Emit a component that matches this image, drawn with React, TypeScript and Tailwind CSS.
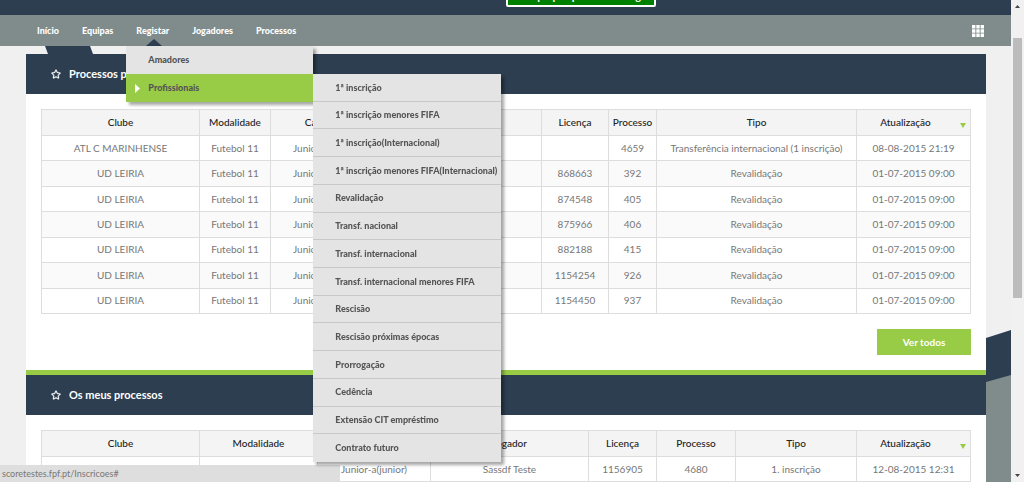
import { FaRegStar } from 'react-icons/fa'

const navItems = ['Início', 'Equipas', 'Registar', 'Jogadores', 'Processos']

const contractItems = [
  '1ª inscrição',
  '1ª inscrição menores FIFA',
  '1ª inscrição(Internacional)',
  '1ª inscrição menores FIFA(Internacional)',
  'Revalidação',
  'Transf. nacional',
  'Transf. internacional',
  'Transf. internacional menores FIFA',
  'Rescisão',
  'Rescisão próximas épocas',
  'Prorrogação',
  'Cedência',
  'Extensão CIT empréstimo',
  'Contrato futuro',
]

const columns = ['Clube', 'Modalidade', 'Categoria', 'Jogador', 'Licença', 'Processo', 'Tipo', 'Atualização']

const pendingWidths = ['w-[158px]', 'w-[71px]', 'w-[111px]', '', 'w-[67px]', 'w-[48px]', 'w-[200px]', 'w-[114px]']
const mineWidths = ['w-[158px]', 'w-[118px]', 'w-[113px]', '', 'w-[68px]', 'w-[79px]', 'w-[121px]', 'w-[114px]']

const pendingRows = [
  ['ATL C MARINHENSE', 'Futebol 11', 'Junior-a(junior)', '', '', '4659', 'Transferência internacional (1 inscrição)', '08-08-2015 21:19'],
  ['UD LEIRIA', 'Futebol 11', 'Junior-a(junior)', '', '868663', '392', 'Revalidação', '01-07-2015 09:00'],
  ['UD LEIRIA', 'Futebol 11', 'Junior-a(junior)', '', '874548', '405', 'Revalidação', '01-07-2015 09:00'],
  ['UD LEIRIA', 'Futebol 11', 'Junior-a(junior)', '', '875966', '406', 'Revalidação', '01-07-2015 09:00'],
  ['UD LEIRIA', 'Futebol 11', 'Junior-a(junior)', '', '882188', '415', 'Revalidação', '01-07-2015 09:00'],
  ['UD LEIRIA', 'Futebol 11', 'Junior-a(junior)', '', '1154254', '926', 'Revalidação', '01-07-2015 09:00'],
  ['UD LEIRIA', 'Futebol 11', 'Junior-a(junior)', '', '1154450', '937', 'Revalidação', '01-07-2015 09:00'],
]

const mineRows = [
  ['ATL C MARINHENSE', 'Futebol 11', 'Junior-a(junior)', 'Sassdf Teste', '1156905', '4680', '1. inscrição', '12-08-2015 12:31'],
]

function PanelTitle({ children }: { children: string }) {
  return (
    <h2 className="flex h-10 items-center gap-2 bg-[#2c3e50] pl-[25px] text-[11px] font-bold text-white">
      <FaRegStar className="size-[10px]" stroke="#fff" strokeWidth={16} />
      {children}
    </h2>
  )
}

function ProcessTable({ widths, rows, height }: { widths: string[]; rows: string[][]; height: string }) {
  return (
    <table className={`w-full table-fixed border-collapse text-center text-[10px] leading-4 whitespace-nowrap ${height}`}>
      <colgroup>
        {widths.map((w, i) => (
          <col key={i} className={w} />
        ))}
      </colgroup>
      <thead>
        <tr className="h-[26px] bg-[#f4f4f4] text-[#222]">
          {columns.map((name, i) => (
            <th key={name} className="relative border border-[#ddd] p-0 pb-px font-medium">
              {i === 7 ? (
                <>
                  <span className="pr-4">{name}</span>
                  <svg className="absolute right-1 bottom-[7px] h-[5px] w-[6px]" viewBox="0 0 6 5">
                    <path d="M0 0h6L3 5z" fill="#99cc46" />
                  </svg>
                </>
              ) : (
                name
              )}
            </th>
          ))}
        </tr>
      </thead>
      <tbody>
        {rows.map((row, r) => (
          <tr key={r} className="bg-white text-[#777] even:bg-[#fafafa]">
            {row.map((cell, i) => (
              <td key={i} className="border border-[#ddd] p-0 pb-px">{cell}</td>
            ))}
          </tr>
        ))}
      </tbody>
    </table>
  )
}

function RegisterMenu() {
  return (
    <div className="absolute top-full left-px z-20 w-[187px] bg-[#e4e4e4] text-[9px] text-[#555] shadow-[3px_3px_3px_rgba(0,0,0,0.35)]">
      <a href="#" className="flex h-7 items-center pl-[22px]">Amadores</a>
      <div className="relative">
        <a href="#" className="flex h-7 items-center bg-[#99cc46] pl-[22px]">
          <svg className="absolute left-[9px] h-[9px] w-[5px]" viewBox="0 0 5 9">
            <path d="M0 0l5 4.5L0 9z" fill="#fff" />
          </svg>
          Profissionais
        </a>
        <ul className="absolute top-0 left-full grid h-[388px] w-[188px] auto-rows-fr bg-[#e4e4e4] shadow-[3px_3px_3px_rgba(0,0,0,0.35)]">
          {contractItems.map((item) => (
            <li key={item} className="flex border-b border-[#c8c8c8] last:border-b-0">
              <a href="#" className="flex flex-1 items-center pl-[22px] whitespace-nowrap">{item}</a>
            </li>
          ))}
        </ul>
      </div>
    </div>
  )
}

function Header() {
  return (
    <header>
      <div className="flex h-[15px] items-end justify-center overflow-hidden bg-[#2c3e50] pb-2 pl-[151px]">
        <button className="flex h-[26px] w-[150px] shrink-0 items-end justify-center rounded-xs border-2 border-white bg-[#008000] pb-px text-[11px] font-bold text-white">
          Campo por preencher: Liga
        </button>
      </div>
      <nav className="flex h-[31px] items-center justify-between bg-[#7f8c8b] pr-[27px] pl-[26px] text-[9px] font-black text-white">
        <ul className="flex h-full gap-px">
          {navItems.map((item) => (
            <li key={item} className="relative">
              <a href="#" className="flex h-full items-center px-[11px]">{item}</a>
              {item === 'Registar' && (
                <>
                  <svg className="absolute bottom-0 left-[21px] h-[7px] w-4" viewBox="0 0 16 7">
                    <path d="M8 0l8 7H0z" fill="#2c3e50" />
                  </svg>
                  <RegisterMenu />
                </>
              )}
            </li>
          ))}
        </ul>
        <button aria-label="Aplicações">
          <svg className="size-3" viewBox="0 0 12 12" fill="#fff">
            <path d="M0 0h3.400v3.400H0zM4.300 0h3.400v3.400H4.300zM8.600 0H12v3.400H8.600zM0 4.300h3.400v3.400H0zM4.300 4.300h3.400v3.400H4.300zM8.600 4.300H12v3.400H8.600zM0 8.600h3.400V12H0zM4.300 8.600h3.400V12H4.300zM8.600 8.600H12V12H8.600z" />
          </svg>
        </button>
      </nav>
    </header>
  )
}

function Scrollbar() {
  return (
    <div className="flex w-[13px] shrink-0 flex-col items-center justify-between bg-[#f1f1f1] py-[5px]">
      <svg className="h-[3px] w-[5px]" viewBox="0 0 5 3">
        <path d="M2.500 0L5 3H0z" fill="#444" />
      </svg>
      <div className="mt-[30px] mb-auto h-[260px] w-[9px] bg-[#bcbcbc]" />
      <svg className="h-[3px] w-[5px]" viewBox="0 0 5 3">
        <path d="M0 0h5L2.500 3z" fill="#444" />
      </svg>
    </div>
  )
}

export default function App() {
  return (
    <div className="flex h-screen overflow-hidden bg-[#f0f0f0] font-['Lato',sans-serif]">
      <div className="relative min-w-0 flex-1 overflow-hidden">
        <svg className="absolute top-[46px] left-[45px] h-2 w-12" viewBox="0 0 48 8">
          <path d="M0 0h45l3 8H3z" fill="#2c3e50" />
        </svg>
        <svg className="absolute top-[330px] right-0 h-[152px] w-[25px]" viewBox="0 0 25 152">
          <path d="M0 8L25 0v152H0z" fill="#2c3e50" />
          <path d="M0 52l25-7v107H0z" fill="#7f8c8b" />
        </svg>
        <Header />
        <main className="relative mt-2 mr-[25px] ml-[26px] bg-white">
          <section>
            <PanelTitle>Processos pendentes</PanelTitle>
            <div className="px-[15px] py-[15px]">
              <ProcessTable widths={pendingWidths} rows={pendingRows} height="h-[205px]" />
              <div className="mt-[15px] flex justify-end">
                <button className="h-[26px] w-[94px] bg-[#99cc46] text-[10px] font-bold text-white">Ver todos</button>
              </div>
            </div>
          </section>
          <section className="border-t-[5px] border-[#99cc46]">
            <PanelTitle>Os meus processos</PanelTitle>
            <div className="p-[15px]">
              <ProcessTable widths={mineWidths} rows={mineRows} height="h-[52px]" />
            </div>
          </section>
        </main>
      </div>
      <Scrollbar />
      <div className="fixed bottom-0 left-0 z-10 h-[17px] w-[340px] bg-[#dedede] pl-[2px] text-[9px] leading-[17px] text-[#777]">
        scoretestes.fpf.pt/Inscricoes#
      </div>
    </div>
  )
}
